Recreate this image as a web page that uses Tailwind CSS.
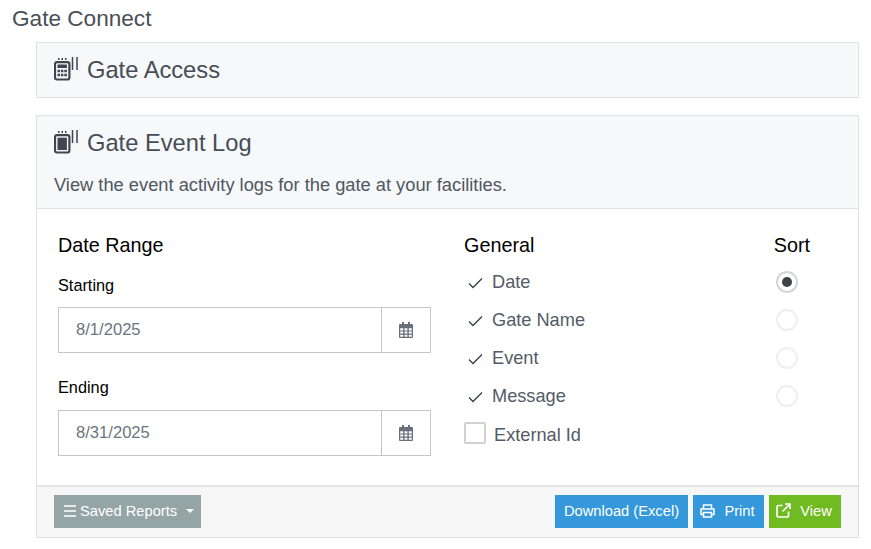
<!doctype html>
<html>
<head>
<meta charset="utf-8">
<script src="https://cdn.jsdelivr.net/npm/@tailwindcss/browser@4"></script>
</head>
<body class="bg-white font-['Liberation_Sans',Arial,sans-serif] text-[#495057] overflow-hidden">
<div class="w-[871px] h-[549px]">
  <div class="pl-3 pt-[6px] h-[42px] text-[22.6px] leading-[26px] text-[#495057]">Gate Connect</div>
  <div class="ml-9 w-[823px]">
    <div class="h-14 border border-[#dfe1e3] bg-[#f7f8fa] pl-[17px] flex items-center gap-[7px]">
      <svg class="w-[26px] h-[26px] mt-[-3px]" viewBox="0 0 26 26" fill="none" stroke="#3f4650">
        <rect x="1" y="6.200" width="14.400" height="17.300" rx="2" stroke-width="2.200"/>
        <rect x="3.500" y="8.500" width="9.400" height="3.500" fill="#3f4650" stroke="none"/>
        <path d="M3.500 15h2.600M7 15h2.400M10.300 15h2.600M3.500 19h2.600M7 19h2.400M10.300 19h2.600" stroke-width="2.400"/>
        <path d="M4 3h1.500M7.500 3h1.500M11 3h1.500" stroke-width="2"/>
        <path d="M18.500 1v13M23 1v13" stroke-width="1.500"/>
      </svg>
      <div class="text-[23.7px] leading-7 text-[#464d57]">Gate Access</div>
    </div>
    <div class="mt-[17px] h-[423px] border border-[#dfe1e3] flex flex-col">
      <div class="h-[93px] shrink-0 bg-[#f7f8fa] border-b border-[#dfe1e3] pl-[17px] pt-[13px]">
        <div class="flex items-center gap-[7px] h-7">
          <svg class="w-[26px] h-[26px] mt-[-3px]" viewBox="0 0 26 26" fill="none" stroke="#3f4650">
            <rect x="1" y="6.200" width="14.400" height="17.300" rx="2" stroke-width="2.200"/>
            <rect x="3.500" y="8.700" width="9.400" height="12.300" fill="#3f4650" stroke="none"/>
            <path d="M4 3h1.500M7.500 3h1.500M11 3h1.500" stroke-width="2"/>
            <path d="M18.500 1v13M23 1v13" stroke-width="1.500"/>
          </svg>
          <div class="text-[23.7px] leading-7 text-[#464d57]">Gate Event Log</div>
        </div>
        <div class="mt-[18px] text-[18.3px] leading-5 text-[#4f5761]">View the event activity logs for the gate at your facilities.</div>
      </div>
      <div class="flex-1 flex pt-6 pl-[21px]">
        <div class="w-[373px] text-black">
          <div class="text-[19.8px] leading-6">Date Range</div>
          <div class="mt-[18px] text-[16.300px] leading-5">Starting</div>
          <div class="mt-3 h-[46px] flex border border-[#c4c7ca]">
            <div class="flex-1 pl-[17px] flex items-center text-[#6c757d] text-[16.600px]">8/1/2025</div>
            <div class="w-[49px] border-l border-[#c4c7ca] flex items-center justify-center">
              <svg class="w-[14px] h-4" viewBox="0 0 14 16" fill="#68707a"><path d="M3 0h2v2h4V0h2v2h2a1 1 0 0 1 1 1v12a1 1 0 0 1-1 1H1a1 1 0 0 1-1-1V3a1 1 0 0 1 1-1h2zM1.200 6.200v2.200h3V6.200zm4.400 0v2.200h2.800V6.200zm4.200 0v2.200h3V6.200zM1.200 9.600v2h3v-2zm4.400 0v2h2.800v-2zm4.200 0v2h3v-2zM1.200 12.800v2h3v-2zm4.400 0v2h2.800v-2zm4.200 0v2h3v-2z" fill-rule="evenodd"/></svg>
            </div>
          </div>
          <div class="mt-[24px] text-[16.300px] leading-5">Ending</div>
          <div class="mt-[13px] h-[46px] flex border border-[#c4c7ca]">
            <div class="flex-1 pl-[17px] flex items-center text-[#6c757d] text-[16.600px]">8/31/2025</div>
            <div class="w-[49px] border-l border-[#c4c7ca] flex items-center justify-center">
              <svg class="w-[14px] h-4" viewBox="0 0 14 16" fill="#68707a"><path d="M3 0h2v2h4V0h2v2h2a1 1 0 0 1 1 1v12a1 1 0 0 1-1 1H1a1 1 0 0 1-1-1V3a1 1 0 0 1 1-1h2zM1.200 6.200v2.200h3V6.200zm4.400 0v2.200h2.800V6.200zm4.200 0v2.200h3V6.200zM1.200 9.600v2h3v-2zm4.400 0v2h2.800v-2zm4.200 0v2h3v-2zM1.200 12.800v2h3v-2zm4.400 0v2h2.800v-2zm4.200 0v2h3v-2z" fill-rule="evenodd"/></svg>
            </div>
          </div>
        </div>
        <div class="ml-[33px] w-[350px]">
          <div class="flex justify-between text-[19.800px] leading-6 text-black pr-[4px]"><span>General</span><span>Sort</span></div>
          <div class="mt-[7px] flex flex-col text-[18.200px] text-[#535b66]">
            <div class="h-[38px] flex items-center">
              <svg class="w-[15px] h-3 ml-[4px]" viewBox="0 0 15 12" fill="none" stroke="#3a3f45" stroke-width="1.300"><path d="M1 6.500l4 4L14 1.500"/></svg>
              <span class="ml-[9px]">Date</span>
              <div class="ml-auto mr-[16px] mt-[-2px] w-[22px] h-[22px] rounded-full border-2 border-[#d3d5d7] flex items-center justify-center"><div class="w-[10px] h-[10px] rounded-full bg-[#3f4246]"></div></div>
            </div>
            <div class="h-[38px] flex items-center">
              <svg class="w-[15px] h-3 ml-[4px]" viewBox="0 0 15 12" fill="none" stroke="#3a3f45" stroke-width="1.300"><path d="M1 6.500l4 4L14 1.500"/></svg>
              <span class="ml-[9px]">Gate Name</span>
              <div class="ml-auto mr-[16px] mt-[-2px] w-[22px] h-[22px] rounded-full border-2 border-[#eeeff0]"></div>
            </div>
            <div class="h-[38px] flex items-center">
              <svg class="w-[15px] h-3 ml-[4px]" viewBox="0 0 15 12" fill="none" stroke="#3a3f45" stroke-width="1.300"><path d="M1 6.500l4 4L14 1.500"/></svg>
              <span class="ml-[9px]">Event</span>
              <div class="ml-auto mr-[16px] mt-[-2px] w-[22px] h-[22px] rounded-full border-2 border-[#eeeff0]"></div>
            </div>
            <div class="h-[38px] flex items-center">
              <svg class="w-[15px] h-3 ml-[4px]" viewBox="0 0 15 12" fill="none" stroke="#3a3f45" stroke-width="1.300"><path d="M1 6.500l4 4L14 1.500"/></svg>
              <span class="ml-[9px]">Message</span>
              <div class="ml-auto mr-[16px] mt-[-2px] w-[22px] h-[22px] rounded-full border-2 border-[#eeeff0]"></div>
            </div>
            <div class="h-[38px] flex items-center">
              <div class="w-[22px] h-[22px] mt-[-4px] rounded-[2px] border-2 border-[#cfd1d3]"></div>
              <span class="ml-2 mt-[2px]">External Id</span>
            </div>
          </div>
        </div>
      </div>
      <div class="h-[52px] shrink-0 bg-[#f7f7f7] border-t-2 border-[#e4e5e6] pt-2 pl-[17px] pr-[17px] flex justify-between items-start text-[14.700px] text-white">
        <div class="h-[33px] w-[147px] bg-[#95a5a6] flex items-center pl-[10px]">
          <svg class="w-[12px] h-3 mt-[-2px]" viewBox="0 0 12 12" fill="none" stroke="#ffffff" stroke-width="1.300"><path d="M0 1h12M0 6h12M0 11h12"/></svg>
          <span class="ml-[4px]">Saved Reports</span>
          <span class="ml-[9px] mt-[-1px] w-0 h-0 border-x-[4px] border-x-transparent border-t-[4px] border-t-white"></span>
        </div>
        <div class="flex gap-[5px]">
          <div class="h-[33px] w-[133px] bg-[#3498db] flex items-center justify-center">Download (Excel)</div>
          <div class="h-[33px] w-[71px] bg-[#3498db] flex items-center justify-center gap-[9px] pr-[2px]">
            <svg class="w-[15px] h-[14px] mt-[-2px]" viewBox="0 0 15 14" fill="none" stroke="white" stroke-width="1.500"><path d="M3.500 5V1h8v4M3.500 10.500H1V5h13v5.500h-2.500M3.500 8.500h8V13h-8z"/></svg>
            <span>Print</span>
          </div>
          <div class="h-[33px] w-[72px] bg-[#6fbb21] flex items-center justify-center gap-[9px] pr-[2px]">
            <svg class="w-[15px] h-[15px] mt-[-2px]" viewBox="0 0 15 15" fill="none" stroke="white" stroke-width="1.700"><path d="M12.500 8.500v4a1.500 1.500 0 0 1-1.500 1.500H2.500A1.500 1.500 0 0 1 1 12.500V4a1.500 1.500 0 0 1 1.500-1.500h4M9 1h5v5M14 1L6.500 8.500"/></svg>
            <span>View</span>
          </div>
        </div>
      </div>
    </div>
  </div>
</div>
</body>
</html>
